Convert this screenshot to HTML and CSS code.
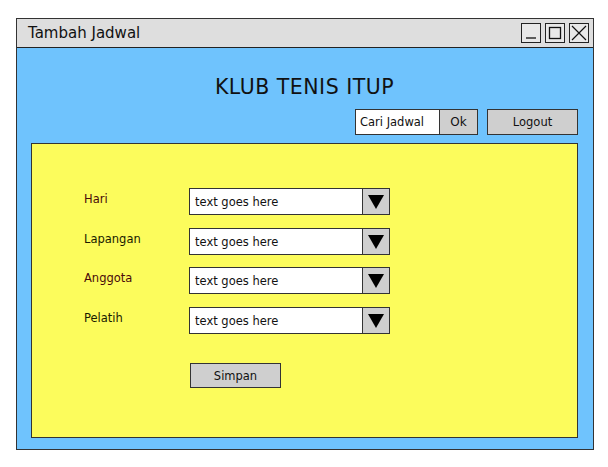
FILE: index.html
```html
<!DOCTYPE html>
<html>
<head>
<meta charset="utf-8">
<link rel="stylesheet" href="styles.css">
</head>
<body>
<div class="window">
  <div class="titlebar">
    <span class="title">Tambah Jadwal</span>
    <div class="winbtns">
      <span class="wbtn"><svg width="18" height="18" viewBox="0 0 18 18"><path d="M4 14 H14" stroke="#111" stroke-width="1.3" fill="none"/></svg></span>
      <span class="wbtn"><svg width="18" height="18" viewBox="0 0 18 18"><rect x="3.5" y="3.5" width="11" height="11" stroke="#111" stroke-width="1.3" fill="none"/></svg></span>
      <span class="wbtn"><svg width="18" height="18" viewBox="0 0 18 18"><path d="M2 2 L16 16 M16 2 L2 16" stroke="#111" stroke-width="1.2" fill="none"/></svg></span>
    </div>
  </div>
  <div class="content">
    <h1 class="heading">KLUB TENIS ITUP</h1>
    <div class="toolbar">
      <div class="search">
        <span class="search-input">Cari Jadwal</span>
        <span class="search-ok">Ok</span>
      </div>
      <span class="btn logout">Logout</span>
    </div>
    <div class="panel">
      <div class="form">
        <div class="row"><span class="label red">Hari</span><div class="combo"><span class="combo-text">text goes here</span><span class="combo-arrow"><svg width="16" height="14" viewBox="0 0 16 14"><path d="M0 0 H16 L8 14 Z" fill="#000"/></svg></span></div></div>
        <div class="row"><span class="label">Lapangan</span><div class="combo"><span class="combo-text">text goes here</span><span class="combo-arrow"><svg width="16" height="14" viewBox="0 0 16 14"><path d="M0 0 H16 L8 14 Z" fill="#000"/></svg></span></div></div>
        <div class="row"><span class="label red">Anggota</span><div class="combo"><span class="combo-text">text goes here</span><span class="combo-arrow"><svg width="16" height="14" viewBox="0 0 16 14"><path d="M0 0 H16 L8 14 Z" fill="#000"/></svg></span></div></div>
        <div class="row"><span class="label">Pelatih</span><div class="combo"><span class="combo-text">text goes here</span><span class="combo-arrow"><svg width="16" height="14" viewBox="0 0 16 14"><path d="M0 0 H16 L8 14 Z" fill="#000"/></svg></span></div></div>
        <div class="actions"><span class="btn simpan">Simpan</span></div>
      </div>
    </div>
  </div>
</div>
</body>
</html>
```

FILE: styles.css
```css
* { box-sizing: border-box; }
html, body { margin: 0; padding: 0; background: #fff; }
body {
  font-family: "DejaVu Sans", "Noto Sans", sans-serif;
  color: #111;
  padding: 18px 0 0 16px;
}
.window {
  width: 578px;
  height: 432px;
  border: 1.5px solid #333;
  background: #6fc3fd;
  display: flex;
  flex-direction: column;
}
.titlebar {
  height: 29px;
  background: #dedede;
  border-bottom: 1.5px solid #222;
  display: flex;
  align-items: center;
  justify-content: space-between;
  padding: 0 4px 0 11px;
}
.title { font-size: 15px; color: #111; }
.winbtns { display: flex; gap: 4px; }
.wbtn {
  width: 20px; height: 20px;
  border: 1.3px solid #222;
  display: flex; align-items: center; justify-content: center;
  background: #e8e8e8;
}
.content {
  flex: 1;
  display: flex;
  flex-direction: column;
  padding: 0 15px 11px 14px;
}
.heading {
  margin: 28px 0 0 0;
  text-align: center;
  font-weight: normal;
  font-size: 20.5px;
  line-height: 22px;
  letter-spacing: 0.5px;
  color: #111;
}
.toolbar {
  display: flex;
  justify-content: flex-end;
  align-items: center;
  gap: 9px;
  margin-top: 11px;
  height: 26px;
}
.search { display: flex; height: 26px; border: 1.3px solid #333; }
.search-input {
  width: 84px; background: #fff;
  font-size: 11.5px; display: flex; align-items: center; padding-left: 4px;
  border-right: 1.3px solid #333;
}
.search-ok {
  width: 37px; background: #cfcfcf;
  font-size: 12px; display: flex; align-items: center; justify-content: center;
}
.btn {
  background: #cfcfcf;
  border: 1.3px solid #333;
  display: flex; align-items: center; justify-content: center;
  font-size: 11.5px;
}
.logout { width: 91px; height: 26px; }
.panel {
  flex: 1;
  margin-top: 8px;
  background: #fcfc5c;
  border: 1.5px solid #333;
  padding: 44px 0 0 52px;
}
.form { display: flex; flex-direction: column; }
.row {
  display: flex;
  align-items: flex-start;
  height: 26px;
  margin-bottom: 14px;
}
.row:nth-child(2) { margin-bottom: 13px; }
.row:nth-child(3) { margin-bottom: 14px; }
.label {
  width: 105px;
  font-size: 11.5px;
  line-height: 14px;
  color: #1a1a00;
  margin-top: 4px;
}
.label.red { color: #4a0a0a; }
.combo {
  width: 201px;
  height: 27px;
  display: flex;
  border: 1.3px solid #333;
  background: #fff;
}
.combo-text {
  flex: 1;
  font-size: 11.5px;
  display: flex; align-items: center; padding-left: 5px;
}
.combo-arrow {
  width: 27px;
  background: #cfcfcf;
  border-left: 1.3px solid #333;
  display: flex; align-items: center; justify-content: center;
}
.actions { margin-top: 16px; padding-left: 106px; }
.simpan { width: 91px; height: 25px; }
```
